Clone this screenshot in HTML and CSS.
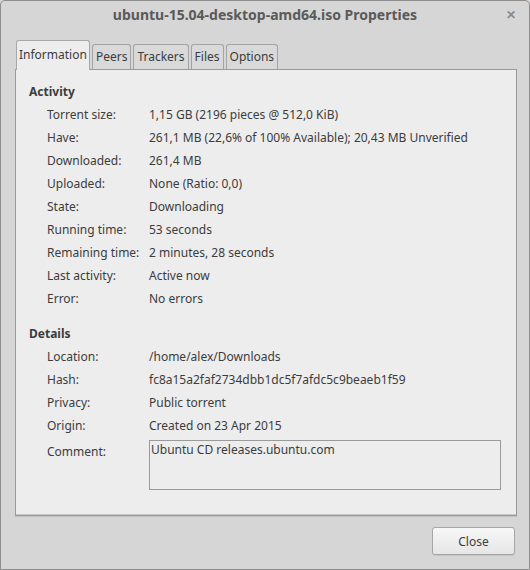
FILE: index.html
```html
<!DOCTYPE html>
<html>
<head>
<meta charset="utf-8">
<link rel="stylesheet" href="styles.css">
</head>
<body>
<div class="window">
  <div class="titlebar">
    <span class="title">ubuntu-15.04-desktop-amd64.iso Properties</span>
    <span class="close-x">&#x2715;</span>
  </div>
  <div class="notebook">
    <div class="tabs">
      <div class="tab active">Information</div>
      <div class="tab">Peers</div>
      <div class="tab">Trackers</div>
      <div class="tab">Files</div>
      <div class="tab">Options</div>
    </div>
    <div class="panel">
      <div class="section-title">Activity</div>
      <div class="grid">
        <div class="label">Torrent size:</div><div class="value">1,15 GB (2196 pieces @ 512,0 KiB)</div>
        <div class="label">Have:</div><div class="value">261,1 MB (22,6% of 100% Available); 20,43 MB Unverified</div>
        <div class="label">Downloaded:</div><div class="value">261,4 MB</div>
        <div class="label">Uploaded:</div><div class="value">None (Ratio: 0,0)</div>
        <div class="label">State:</div><div class="value">Downloading</div>
        <div class="label">Running time:</div><div class="value">53 seconds</div>
        <div class="label">Remaining time:</div><div class="value">2 minutes, 28 seconds</div>
        <div class="label">Last activity:</div><div class="value">Active now</div>
        <div class="label">Error:</div><div class="value">No errors</div>
      </div>
      <div class="section-title details">Details</div>
      <div class="grid">
        <div class="label">Location:</div><div class="value">/home/alex/Downloads</div>
        <div class="label">Hash:</div><div class="value">fc8a15a2faf2734dbb1dc5f7afdc5c9beaeb1f59</div>
        <div class="label">Privacy:</div><div class="value">Public torrent</div>
        <div class="label">Origin:</div><div class="value">Created on 23 Apr 2015</div>
        <div class="label comment-label">Comment:</div><div class="value"><div class="comment">Ubuntu CD releases.ubuntu.com</div></div>
      </div>
    </div>
  </div>
  <div class="actions">
    <button class="btn">Close</button>
  </div>
</div>
</body>
</html>
```
FILE: styles.css
```css
html, body {
  margin: 0;
  padding: 0;
  background: #d6d6d6;
}
body {
  font-family: "Noto Sans", "Open Sans", sans-serif;
  font-size: 12px;
  color: #3c3c3c;
}
.window {
  width: 530px;
  height: 570px;
  box-sizing: border-box;
  border: 1px solid #8e8e8e;
  border-radius: 5px 5px 0 0;
  background: #d6d6d6;
  display: flex;
  flex-direction: column;
}
.titlebar {
  height: 39px;
  position: relative;
  display: flex;
  justify-content: center;
}
.title {
  font-weight: bold;
  font-size: 14px;
  color: #5a5a5a;
  margin-top: 4px;
}
.close-x {
  position: absolute;
  right: 13px;
  top: 5px;
  font-size: 12px;
  font-weight: bold;
  color: #8a8a8a;
}
.notebook {
  margin: 0 12px 0 14px;
  display: flex;
  flex-direction: column;
}
.tabs {
  display: flex;
  align-items: flex-end;
  gap: 2px;
  padding-left: 1px;
  height: 29px;
  position: relative;
  z-index: 1;
}
.tab {
  height: 25px;
  line-height: 24px;
  padding: 0 3px;
  box-sizing: border-box;
  border: 1px solid #a4a4a4;
  border-bottom: none;
  border-radius: 3px 3px 0 0;
  background: #d9d9d9;
  color: #3c3c3c;
}
.tab.active {
  height: 30px;
  line-height: 27px;
  background: #ededed;
  margin-bottom: -1px;
  padding: 0 2px;
  border-color: #a8a8a8;
}
.panel {
  background: #ededed;
  border: 1px solid #9a9a9a;
  box-shadow: inset 0 -1px 0 #c8c8c8, 0 1px 0 #c0c0c0;
  height: 447px;
  box-sizing: border-box;
  padding: 13px 0 0 13px;
}
.section-title {
  font-weight: bold;
  height: 23px;
  line-height: 17px;
}
.section-title.details {
  margin-top: 12px;
}
.grid {
  display: grid;
  grid-template-columns: 102px 1fr;
  grid-auto-rows: 23px;
  padding-left: 18px;
  line-height: 17px;
}
.label, .value {
  white-space: nowrap;
}
.comment-label {
  padding-top: 3px;
}
.comment {
  width: 352px;
  height: 50px;
  box-sizing: border-box;
  border: 1px solid #9a9a9a;
  line-height: 15px;
  padding: 1px 0 0 1px;
}
.actions {
  display: flex;
  justify-content: flex-end;
  padding: 11px 14px 0 0;
}
.btn {
  width: 83px;
  height: 28px;
  font-family: inherit;
  font-size: 12px;
  color: #3c3c3c;
  border: 1px solid #a6a6a6;
  border-radius: 3px;
  background: linear-gradient(#f7f7f7, #e6e6e6);
  box-shadow: 0 1px 0 #c4c4c4;
  padding: 0;
}
```
